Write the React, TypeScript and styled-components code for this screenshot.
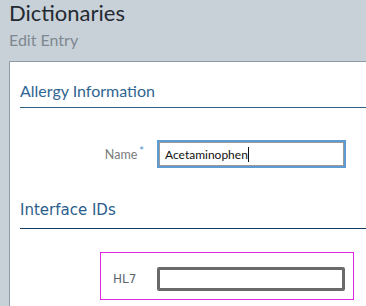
import React from 'react'
import styled, { createGlobalStyle } from 'styled-components'

const GlobalStyle = createGlobalStyle`
  html, body {
    margin: 0;
    padding: 0;
    background: #c8d0d8;
    font-family: Lato, "Open Sans", sans-serif;
    overflow: hidden;
  }
`

const Page = styled.div`
  width: 366px;
  height: 306px;
  overflow: hidden;
`

const Header = styled.header`
  padding: 0 0 0 9px;
  height: 61px;

  h1 {
    margin: 0;
    font-size: 22px;
    font-weight: 400;
    line-height: 26px;
    color: #232a31;
  }

  h2 {
    margin: 2px 0 0;
    font-size: 16px;
    font-weight: 400;
    line-height: 24px;
    color: #7e8891;
  }
`

const Panel = styled.main`
  margin-left: 9px;
  background: #fff;
  border-top: 1px solid #8f9ba6;
  border-left: 1px solid #8f9ba6;
  padding-left: 10px;
  height: 260px;
`

const SectionTitle = styled.h3<{ $alt?: boolean }>`
  margin: ${({ $alt }) => ($alt ? '32px 0 0' : '0')};
  padding: ${({ $alt }) => ($alt ? '0 0 8px' : '19px 0 6px')};
  font-family: ${({ $alt }) => ($alt ? '"DejaVu Sans", Lato, sans-serif' : 'Lato, sans-serif')};
  font-size: ${({ $alt }) => ($alt ? '15px' : '16px')};
  font-weight: 400;
  line-height: 20px;
  color: ${({ $alt }) => ($alt ? '#2b5d8c' : '#2f6592')};
  border-bottom: 1px solid ${({ $alt }) => ($alt ? '#143a61' : '#2f6183')};
`

const FieldRow = styled.div`
  display: flex;
  align-items: center;
  margin-top: 32px;
`

const Label = styled.label`
  width: 124px;
  text-align: right;
  margin-right: 13px;
  font-size: 12.5px;
  color: #7b7b7b;
`

const Required = styled.span`
  color: #4a90d0;
  font-size: 11px;
  margin-left: 2px;
  position: relative;
  top: -4px;
`

const FakeInput = styled.div`
  box-sizing: border-box;
  width: 189px;
  height: 28px;
  border: 2px solid #5d9bd1;
  box-shadow: inset 0 0 0 1px #9a9a9a;
  padding: 0 6px;
  display: flex;
  align-items: center;
  font-size: 12px;
  color: #111;
`

const Caret = styled.span`
  display: inline-block;
  width: 1px;
  height: 15px;
  background: #111;
`

const Highlight = styled.div`
  box-sizing: border-box;
  margin: 23px 0 0 80px;
  width: 254px;
  height: 48px;
  border: 1px solid #e026e0;
  display: flex;
  align-items: center;
  padding: 6px 0 0 12px;
`

const IdLabel = styled.span`
  width: 44px;
  font-family: "DejaVu Sans", sans-serif;
  font-size: 12px;
  color: #5c6670;
`

const IdInput = styled.div`
  box-sizing: border-box;
  width: 188px;
  height: 24px;
  border: 3px solid #6a6a6a;
  border-radius: 2px;
  background: #fff;
`

export default function App() {
  return (
    <>
      <GlobalStyle />
      <Page>
        <Header>
          <h1>Dictionaries</h1>
          <h2>Edit Entry</h2>
        </Header>
        <Panel>
          <SectionTitle>Allergy Information</SectionTitle>
          <FieldRow>
            <Label>
              Name<Required>*</Required>
            </Label>
            <FakeInput>
              Acetaminophen
              <Caret />
            </FakeInput>
          </FieldRow>
          <SectionTitle $alt>Interface IDs</SectionTitle>
          <Highlight>
            <IdLabel>HL7</IdLabel>
            <IdInput />
          </Highlight>
        </Panel>
      </Page>
    </>
  )
}
